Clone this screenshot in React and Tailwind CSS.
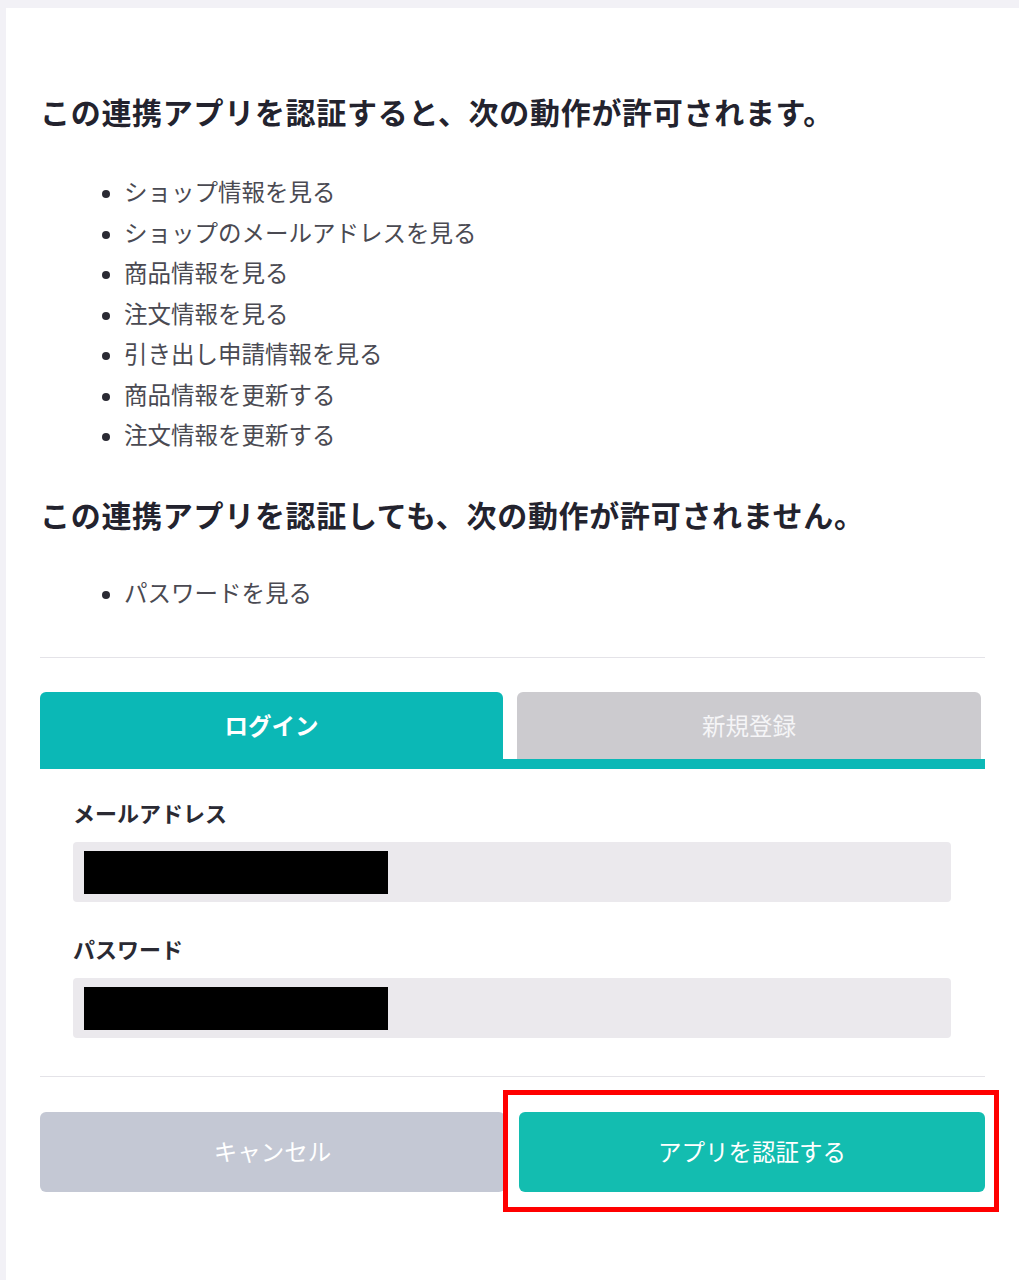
const allowed = [
  'ショップ情報を見る',
  'ショップのメールアドレスを見る',
  '商品情報を見る',
  '注文情報を見る',
  '引き出し申請情報を見る',
  '商品情報を更新する',
  '注文情報を更新する',
];

const denied = ['パスワードを見る'];

function PermissionList({ items }) {
  return (
    <ul className="list-disc pl-[84px] text-[23.5px] leading-[40.5px] text-[#4a4a52] marker:text-[20px] marker:text-[#2a2a33]">
      {items.map((item) => (
        <li key={item}>{item}</li>
      ))}
    </ul>
  );
}

function Field({ label, className }) {
  return (
    <div className={className}>
      <p className="text-[22px] font-bold leading-[30px] text-[#2a2a33]">{label}</p>
      <div className="mt-[15px] flex h-[60px] items-center rounded-[4px] bg-[#ebe9ed] px-[11px]">
        <div className="h-[43px] w-[304px] bg-black" />
      </div>
    </div>
  );
}

export default function App() {
  return (
    <div
      className="flex h-[1280px] flex-col bg-[#f2f1f6] pl-[6px] pt-[8px]"
      style={{ fontFamily: '"Noto Sans CJK JP", "Noto Sans", sans-serif' }}
    >
      <main className="flex-1 bg-white px-[34px] pt-[83px]">
        <h1 className="text-[30px] font-bold leading-[40px] tracking-[0.7px] text-[#23232e]">
          この連携アプリを認証すると、次の動作が許可されます。
        </h1>
        <div className="mt-[40px]">
          <PermissionList items={allowed} />
        </div>

        <h2 className="mt-[39px] text-[30px] font-bold leading-[40px] tracking-[0.7px] text-[#23232e]">
          この連携アプリを認証しても、次の動作が許可されません。
        </h2>
        <div className="mt-[38px]">
          <PermissionList items={denied} />
        </div>

        <hr className="mt-[45px] border-t border-[#e4e3e8]" />

        <div className="mt-[34px]">
          <div className="flex h-[67px] gap-[14px]">
            <button className="flex w-[463px] items-center justify-center rounded-t-[6px] bg-[#0bb8b6] text-[23.5px] font-bold text-white">
              ログイン
            </button>
            <button className="flex w-[464px] items-center justify-center rounded-t-[6px] bg-[#cccbcf] text-[23.5px] text-[#f5f5f7]">
              新規登録
            </button>
          </div>
          <div className="h-[10px] bg-[#0bb8b6]" />
        </div>

        <div className="pl-[33px] pr-[34px]">
          <Field label="メールアドレス" className="mt-[28px]" />
          <Field label="パスワード" className="mt-[31px]" />
        </div>

        <hr className="mt-[38px] border-t border-[#e4e3e8]" />

        <div className="mt-[35px] flex h-[80px] gap-[14px]">
          <button className="w-[465px] rounded-[6px] bg-[#c4c8d4] text-[23.5px] text-white">
            キャンセル
          </button>
          <div className="relative w-[466px]">
            <button className="h-full w-full rounded-[6px] bg-[#13bdb0] text-[23.5px] text-white">
              アプリを認証する
            </button>
            <div className="pointer-events-none absolute -bottom-[20px] -left-[16px] -right-[14px] -top-[22px] border-[5px] border-[#ff0000]" />
          </div>
        </div>
      </main>
    </div>
  );
}
